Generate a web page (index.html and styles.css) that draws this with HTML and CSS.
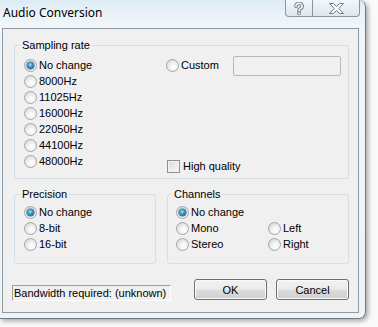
FILE: index.html
```html
<!DOCTYPE html>
<html>
<head>
<meta charset="utf-8">
<link rel="stylesheet" href="styles.css">
</head>
<body>
<div class="window">
  <div class="titlebar">
    <span class="title">Audio Conversion</span>
    <div class="caption-btns">
      <span class="cbtn help">
        <svg width="12" height="13" viewBox="0 0 12 13">
          <path d="M3 4.2 A3 2.8 0 1 1 7.4 6.6 Q6 7.3 6 9" fill="none" stroke="#6f7c88" stroke-width="3.6" stroke-linecap="round"/>
          <path d="M3 4.2 A3 2.8 0 1 1 7.4 6.6 Q6 7.3 6 9" fill="none" stroke="#fbfcfd" stroke-width="1.6" stroke-linecap="round"/>
          <circle cx="6" cy="11.4" r="1.5" fill="#fbfcfd" stroke="#6f7c88" stroke-width="1"/>
        </svg>
      </span>
      <span class="cbtn close">
        <svg width="15" height="11" viewBox="0 0 15 11">
          <polygon points="0.5,0.5 4.3,0.5 7.5,3.4 10.7,0.5 14.5,0.5 9.8,5.5 14.5,10.5 10.7,10.5 7.5,7.6 4.3,10.5 0.5,10.5 5.2,5.5" fill="#fbfcfd" stroke="#6f7c88" stroke-width="1" stroke-linejoin="round"/>
        </svg>
      </span>
    </div>
  </div>
  <div class="client">
    <fieldset class="group sampling">
      <legend>Sampling rate</legend>
      <div class="sampling-grid">
        <span class="opt r1"><i class="radio on"></i>No change</span>
        <span class="opt r2"><i class="radio"></i>8000Hz</span>
        <span class="opt r3"><i class="radio"></i>11025Hz</span>
        <span class="opt r4"><i class="radio"></i>16000Hz</span>
        <span class="opt r5"><i class="radio"></i>22050Hz</span>
        <span class="opt r6"><i class="radio"></i>44100Hz</span>
        <span class="opt r7"><i class="radio"></i>48000Hz</span>
        <div class="custom-row">
          <span class="opt"><i class="radio"></i>Custom</span>
          <span class="textbox"></span>
        </div>
        <span class="opt hq"><i class="check"></i>High quality</span>
      </div>
    </fieldset>
    <div class="groups-row">
      <fieldset class="group precision">
        <legend>Precision</legend>
        <div class="list">
          <span class="opt"><i class="radio on"></i>No change</span>
          <span class="opt"><i class="radio"></i>8-bit</span>
          <span class="opt"><i class="radio"></i>16-bit</span>
        </div>
      </fieldset>
      <fieldset class="group channels">
        <legend>Channels</legend>
        <div class="channels-grid">
          <span class="opt c-nc"><i class="radio on"></i>No change</span>
          <span class="opt"><i class="radio"></i>Mono</span>
          <span class="opt"><i class="radio"></i>Left</span>
          <span class="opt"><i class="radio"></i>Stereo</span>
          <span class="opt"><i class="radio"></i>Right</span>
        </div>
      </fieldset>
    </div>
    <div class="bottom-row">
      <div class="status">Bandwidth required: (unknown)</div>
      <span class="btn ok">OK</span>
      <span class="btn cancel">Cancel</span>
    </div>
  </div>
</div>
</body>
</html>
```

FILE: styles.css
```css
html, body {
  margin: 0;
  padding: 0;
}
body {
  width: 378px;
  height: 327px;
  overflow: hidden;
  background: #fafafa;
  font-family: "Liberation Sans", Arial, sans-serif;
  font-size: 11px;
  color: #000;
}
.window {
  width: 366px;
  height: 319px;
  box-sizing: border-box;
  padding: 0 6px 5px 2px;
  display: flex;
  flex-direction: column;
  background: linear-gradient(180deg, #dcebf3 0px, #eaf3f8 14px, #f1f6f9 28px, #eef3f6 100%);
  border-right: 1px solid #6f7a84;
  border-bottom: 1px solid #6f7a84;
  border-radius: 0 7px 7px 0;
  box-shadow: 2px 2px 5px rgba(0, 0, 0, 0.35);
}
.titlebar {
  height: 28px;
  flex: none;
  display: flex;
  justify-content: space-between;
  align-items: flex-start;
}
.title {
  font-family: "Noto Sans", "Open Sans", sans-serif;
  font-size: 12px;
  line-height: 16px;
  margin: 5px 0 0 1px;
  color: #000;
}
.caption-btns {
  display: flex;
  margin-right: -1px;
}
.cbtn {
  height: 17px;
  box-sizing: border-box;
  display: flex;
  align-items: center;
  justify-content: center;
  border: 1px solid #8a97a3;
  border-top: none;
  background: linear-gradient(180deg, #f3f7fa 0%, #e8eff4 50%, #dde6ec 100%);
}
.help {
  width: 28px;
  border-radius: 0 0 0 4px;
}
.close {
  width: 47px;
  border-left: none;
  border-radius: 0 0 4px 0;
}
.client {
  flex: 1;
  border: 1px solid #8e99a3;
  background: #f0f0f0;
}
.group {
  margin: 0;
  border: 1px solid #d5dfe5;
  border-radius: 3px;
  min-inline-size: 0;
  box-sizing: border-box;
}
.group legend {
  padding: 0 2px;
  margin-left: -4px;
  line-height: 13px;
}
.sampling {
  margin: 10px 0 0 11px;
  width: 335px;
  padding: 5px 8px 9px 9px;
}
.sampling-grid {
  display: grid;
  grid-template-columns: 142px 1fr;
  grid-template-rows: repeat(7, 16px);
}
.opt {
  display: flex;
  align-items: center;
  gap: 2px;
  white-space: nowrap;
  line-height: 13px;
}
.r1 { grid-area: 1 / 1; }
.r2 { grid-area: 2 / 1; }
.r3 { grid-area: 3 / 1; }
.r4 { grid-area: 4 / 1; }
.r5 { grid-area: 5 / 1; }
.r6 { grid-area: 6 / 1; }
.r7 { grid-area: 7 / 1; }
.custom-row {
  grid-area: 1 / 2;
  display: grid;
  grid-template-columns: 67px 108px;
  align-items: center;
}
.textbox {
  height: 20px;
  margin: -1px 0 -3px 0;
  box-sizing: border-box;
  border: 1px solid #b5b9bd;
  border-radius: 2px;
  background: #f0f0f0;
}
.hq {
  grid-area: 7 / 2;
  align-self: end;
  margin-bottom: -4px;
  margin-left: 1px;
  gap: 3px;
}
.radio {
  width: 13px;
  height: 13px;
  flex: none;
  box-sizing: border-box;
  border-radius: 50%;
  border: 1px solid #a3a6a9;
  background: radial-gradient(circle at 60% 65%, #ffffff 0%, #f4f4f4 35%, #d9dadb 80%);
  position: relative;
}
.radio.on::after {
  content: "";
  position: absolute;
  left: 2px;
  top: 2px;
  width: 7px;
  height: 7px;
  border-radius: 50%;
  background: radial-gradient(circle at 45% 40%, #a6e3fb 0%, #3c98c8 40%, #154f78 85%);
  box-shadow: 0 0 0 0.5px #23577c;
}
.check {
  width: 13px;
  height: 13px;
  flex: none;
  box-sizing: border-box;
  border: 1px solid #8e8f8f;
  background: linear-gradient(135deg, #d6d8da 0%, #eceef0 60%, #f6f6f6 100%);
  box-shadow: inset 0 0 0 1px #f4f4f4;
}
.groups-row {
  display: flex;
  gap: 11px;
  margin: 9px 0 0 11px;
}
.precision {
  width: 142px;
  padding: 3px 8px 11px 9px;
}
.channels {
  width: 182px;
  padding: 3px 8px 11px 8px;
}
.list {
  display: grid;
  grid-template-rows: repeat(3, 16px);
}
.channels-grid {
  display: grid;
  grid-template-columns: 92px 1fr;
  grid-template-rows: repeat(3, 16px);
}
.c-nc {
  grid-column: 1 / span 2;
}
.bottom-row {
  display: flex;
  align-items: flex-start;
  margin: 15px 0 0 9px;
}
.status {
  width: 159px;
  height: 16px;
  box-sizing: border-box;
  margin-top: 6px;
  padding-left: 1px;
  line-height: 14px;
  border: 1px solid;
  border-color: #a0a0a0 #ffffff #ffffff #a0a0a0;
  white-space: nowrap;
}
.btn {
  width: 73px;
  height: 21px;
  box-sizing: border-box;
  display: flex;
  align-items: center;
  justify-content: center;
  border: 1px solid #707070;
  border-radius: 3px;
  background: linear-gradient(180deg, #f2f2f2 0%, #ebebeb 48%, #dddddd 52%, #cfcfcf 100%);
  box-shadow: inset 0 0 0 1px #fbfbfb;
}
.ok {
  margin-left: 23px;
}
.cancel {
  margin-left: 9px;
}
```
